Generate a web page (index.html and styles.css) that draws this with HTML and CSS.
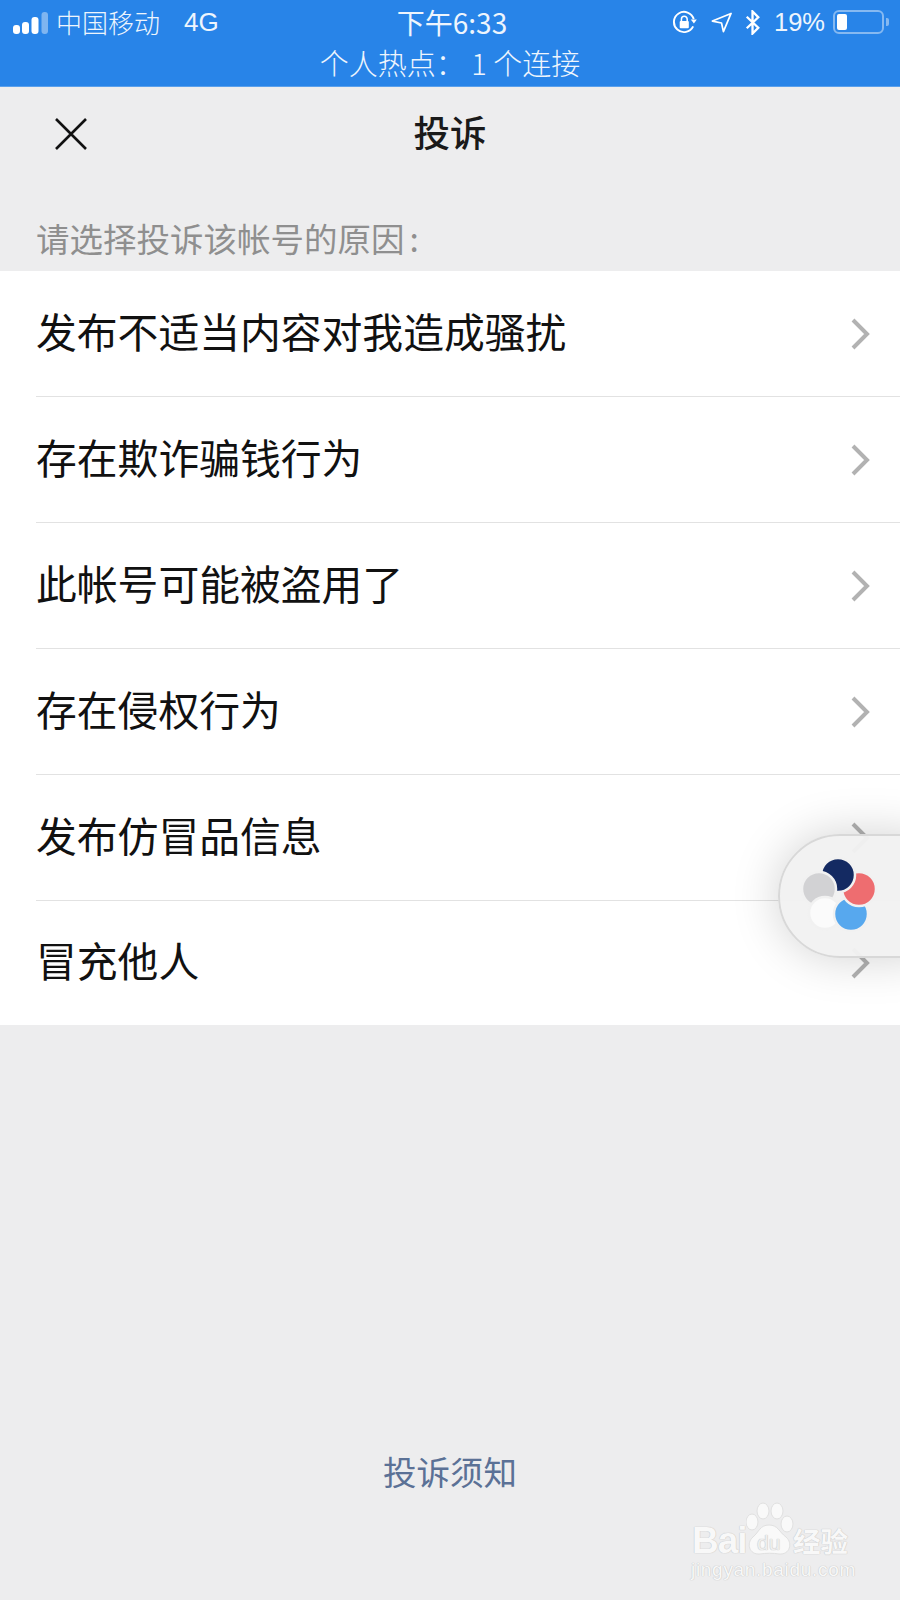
FILE: index.html
```html
<!DOCTYPE html>
<html lang="zh-CN">
<head>
<meta charset="utf-8">
<title>投诉</title>
<link rel="stylesheet" href="styles.css">
</head>
<body>
<div class="page">
  <div class="status">
    <div class="status-row">
      <div class="status-left">
        <svg class="signal" viewBox="0 0 35 22" width="35" height="22">
          <rect x="0" y="13" width="7" height="9" rx="3" fill="#fff"/>
          <rect x="9" y="10" width="7" height="12" rx="3" fill="#fff"/>
          <rect x="18.500" y="5" width="7" height="17" rx="3" fill="#fff"/>
          <rect x="28.500" y="0" width="6.500" height="22" rx="3" fill="#7fb5f0"/>
        </svg>
        <span class="carrier">中国移动</span>
        <span class="net">4G</span>
      </div>
      <div class="time">下午6:33</div>
      <div class="status-right">
        <svg class="ic-lock" viewBox="0 0 26 26" width="25" height="25">
          <path d="M22 17 A10.5 10.500 0 1 1 22.600 9.500" fill="none" stroke="#fff" stroke-width="2"/>
          <path d="M19.500 10 L25.800 10 L22.800 14 Z" fill="#fff"/>
          <rect x="8" y="11.500" width="9.500" height="7.500" rx="1" fill="#fff"/>
          <path d="M9.800 12 V9.500 A3 3 0 0 1 15.800 9.500 V12" fill="none" stroke="#fff" stroke-width="1.600"/>
        </svg>
        <svg class="ic-loc" viewBox="0 0 22 22" width="21" height="21">
          <path d="M21 1.500 L1.500 9.500 L11 11.500 L13 20.500 Z" fill="none" stroke="#fff" stroke-width="1.800" stroke-linejoin="round"/>
        </svg>
        <svg class="ic-bt" viewBox="0 0 16 26" width="16" height="25">
          <path d="M1.500 7 L13.500 18.500 L7.500 24.500 V1.500 L13.500 7.500 L1.500 19" fill="none" stroke="#fff" stroke-width="2.400"/>
        </svg>
        <span class="pct">19%</span>
        <div class="battery"><div class="battery-fill"></div></div>
        <div class="battery-nub"></div>
      </div>
    </div>
    <div class="hotspot">个人热点： 1 个连接</div>
  </div>

  <div class="nav">
    <svg class="close" viewBox="0 0 32 32" width="32" height="32">
      <path d="M1 1 L31 31 M31 1 L1 31" fill="none" stroke="#111" stroke-width="2.600"/>
    </svg>
    <div class="nav-title">投诉</div>
  </div>

  <div class="hint">请选择投诉该帐号的原因<span class="hint-colon">:</span></div>

  <div class="list">
    <div class="row"><span class="row-text">发布不适当内容对我造成骚扰</span><svg class="chev" viewBox="0 0 20 32" width="20" height="32"><path d="M3 2 L17 16 L3 30" fill="none" stroke="#b2b2b2" stroke-width="4"/></svg></div>
    <div class="row"><span class="row-text">存在欺诈骗钱行为</span><svg class="chev" viewBox="0 0 20 32" width="20" height="32"><path d="M3 2 L17 16 L3 30" fill="none" stroke="#b2b2b2" stroke-width="4"/></svg></div>
    <div class="row"><span class="row-text">此帐号可能被盗用了</span><svg class="chev" viewBox="0 0 20 32" width="20" height="32"><path d="M3 2 L17 16 L3 30" fill="none" stroke="#b2b2b2" stroke-width="4"/></svg></div>
    <div class="row"><span class="row-text">存在侵权行为</span><svg class="chev" viewBox="0 0 20 32" width="20" height="32"><path d="M3 2 L17 16 L3 30" fill="none" stroke="#b2b2b2" stroke-width="4"/></svg></div>
    <div class="row"><span class="row-text">发布仿冒品信息</span><svg class="chev" viewBox="0 0 20 32" width="20" height="32"><path d="M3 2 L17 16 L3 30" fill="none" stroke="#b2b2b2" stroke-width="4"/></svg></div>
    <div class="row"><span class="row-text">冒充他人</span><svg class="chev" viewBox="0 0 20 32" width="20" height="32"><path d="M3 2 L17 16 L3 30" fill="none" stroke="#b2b2b2" stroke-width="4"/></svg></div>
  </div>

  <div class="spacer"></div>
  <div class="notice">投诉须知</div>

  <div class="pill">
    <svg class="petals" viewBox="0 0 84 84" width="84" height="84">
      <defs>
        <clipPath id="blue-over-white"><rect x="14" y="40" width="28" height="40"/></clipPath>
      </defs>
      <g stroke="#f1f1f1" stroke-width="2.500">
        <circle cx="49" cy="54" r="17" fill="#57a8ee"/>
        <circle cx="57" cy="29" r="17" fill="#ee6d70"/>
        <circle cx="36" cy="15" r="17" fill="#142a62"/>
        <circle cx="17" cy="29" r="17" fill="#d2d2d4"/>
        <circle cx="23" cy="53" r="16" fill="#fbfbfb"/>
        <circle cx="49" cy="54" r="17" fill="#57a8ee" clip-path="url(#blue-over-white)"/>
      </g>
    </svg>
  </div>

  <div class="mark">
    <svg class="paw" viewBox="0 0 50 56" width="50" height="56">
      <g fill="#f9f9f9" stroke="#e0e0e0" stroke-width="1">
        <ellipse cx="6" cy="20" rx="6" ry="8"/>
        <ellipse cx="17" cy="9" rx="6" ry="8"/>
        <ellipse cx="31" cy="9" rx="6" ry="8"/>
        <ellipse cx="41" cy="22" rx="6" ry="8"/>
        <path d="M23 23 C32 23 33 30 40 35 C47 41 44 53 33 52 C28 51 19 51 14 52 C3 53 0 41 7 35 C13 30 14 23 23 23 Z"/>
      </g>
    </svg>
    <span class="mark-bai">Bai</span>
    <span class="mark-du">du</span>
    <span class="mark-cn">经验</span>
    <span class="mark-url">jingyan.baidu.com</span>
  </div>
</div>
</body>
</html>
```
FILE: styles.css
```css
* { box-sizing: border-box; }
html, body { margin: 0; padding: 0; }
body {
  width: 900px;
  height: 1600px;
  overflow: hidden;
  font-family: "Noto Sans CJK SC", "Noto Sans", sans-serif;
}
.page {
  position: relative;
  width: 900px;
  height: 1600px;
  overflow: hidden;
  display: flex;
  flex-direction: column;
  background: #ededee;
}
.status {
  height: 87px;
  flex: none;
  background: #2884e8;
  color: #eef5fd;
  padding-top: 2px;
  border-bottom: 1px solid #5aa0ec;
}
.status-row {
  height: 40px;
  display: grid;
  grid-template-columns: 1fr auto 1fr;
  align-items: center;
  padding: 0 11px 0 13px;
}
.status-left { display: flex; align-items: center; }
.signal { flex: none; margin-top: 2px; }
.carrier { margin-left: 8px; font-size: 26px; line-height: 40px; font-weight: 300; }
.net { margin-left: 24px; font-family: "Liberation Sans", sans-serif; font-size: 26px; line-height: 40px; }
.time { font-size: 28px; line-height: 40px; margin-left: 2px; }
.status-right { display: flex; align-items: center; justify-content: flex-end; }
.ic-lock { margin-right: 14px; }
.ic-loc { margin-right: 13px; }
.ic-bt { margin-right: 13px; }
.pct { font-family: "Liberation Sans", sans-serif; font-size: 25.500px; line-height: 40px; margin-right: 8px; }
.battery {
  width: 51px;
  height: 24px;
  border: 2px solid #86b9f1;
  border-radius: 6px;
  padding: 2px;
}
.battery-fill { width: 10px; height: 100%; background: #fff; border-radius: 2px; }
.battery-nub { width: 3px; height: 8px; margin-left: 2px; background: #86b9f1; border-radius: 0 2px 2px 0; }
.hotspot {
  margin-top: 1px;
  text-align: center;
  font-size: 29px;
  line-height: 38px;
  font-weight: 300;
}
.nav {
  height: 94px;
  flex: none;
  position: relative;
  display: flex;
  align-items: center;
  justify-content: center;
}
.close { position: absolute; left: 55px; top: 31px; }
.nav-title { font-size: 36.500px; line-height: 94px; font-weight: 500; color: #1a1a1a; margin-top: -4px; }
.hint {
  flex: none;
  height: 90px;
  padding: 35px 0 0 36px;
  font-size: 33.500px;
  line-height: 44px;
  color: #8f8f8f;
  font-weight: 400;
  white-space: nowrap;
}
.hint-colon { margin-left: 5px; }
.list { flex: none; background: #fff; padding-left: 36px; }
.row {
  height: 126px;
  display: flex;
  align-items: center;
  justify-content: space-between;
  padding-right: 30px;
  border-bottom: 1px solid #e2e2e2;
}
.row:last-child { border-bottom: 0; height: 124px; }
.row-text { font-size: 40.800px; line-height: 56px; color: #111; font-weight: 400; margin-top: -6px; }
.spacer { flex: 1; }
.notice {
  flex: none;
  height: 152px;
  text-align: center;
  font-size: 33.500px;
  line-height: 46px;
  color: #5b7196;
}
.pill {
  position: absolute;
  left: 778px;
  top: 834px;
  width: 180px;
  height: 124px;
  border-radius: 62px;
  background: rgba(241, 241, 241, 0.96);
  border: 2px solid #d8d8d8;
  box-shadow: 0 0 48px rgba(0, 0, 0, 0.18);
}
.petals { position: absolute; left: 22px; top: 24px; overflow: visible; }
.mark {
  position: absolute;
  left: 690px;
  top: 1500px;
  width: 170px;
  height: 90px;
  color: #f8f8f8;
  font-family: "Liberation Sans", sans-serif;
  text-shadow: 0 0 1px #c4c4c4, 0 0 1px #c4c4c4;
}
.paw { position: absolute; left: 56px; top: 2px; }
.mark-bai { position: absolute; left: 2px; top: 26px; font-size: 37px; line-height: 30px; font-weight: 700; letter-spacing: -1px; }
.mark-du { position: absolute; left: 67px; top: 31px; font-size: 21px; line-height: 24px; color: #efefef; }
.mark-cn { position: absolute; left: 103px; top: 22px; font-family: "Noto Sans CJK SC", sans-serif; font-size: 27.500px; line-height: 36px; font-weight: 700; }
.mark-url { position: absolute; left: 1px; top: 58px; font-size: 19px; line-height: 24px; letter-spacing: 0.7px; }
```
